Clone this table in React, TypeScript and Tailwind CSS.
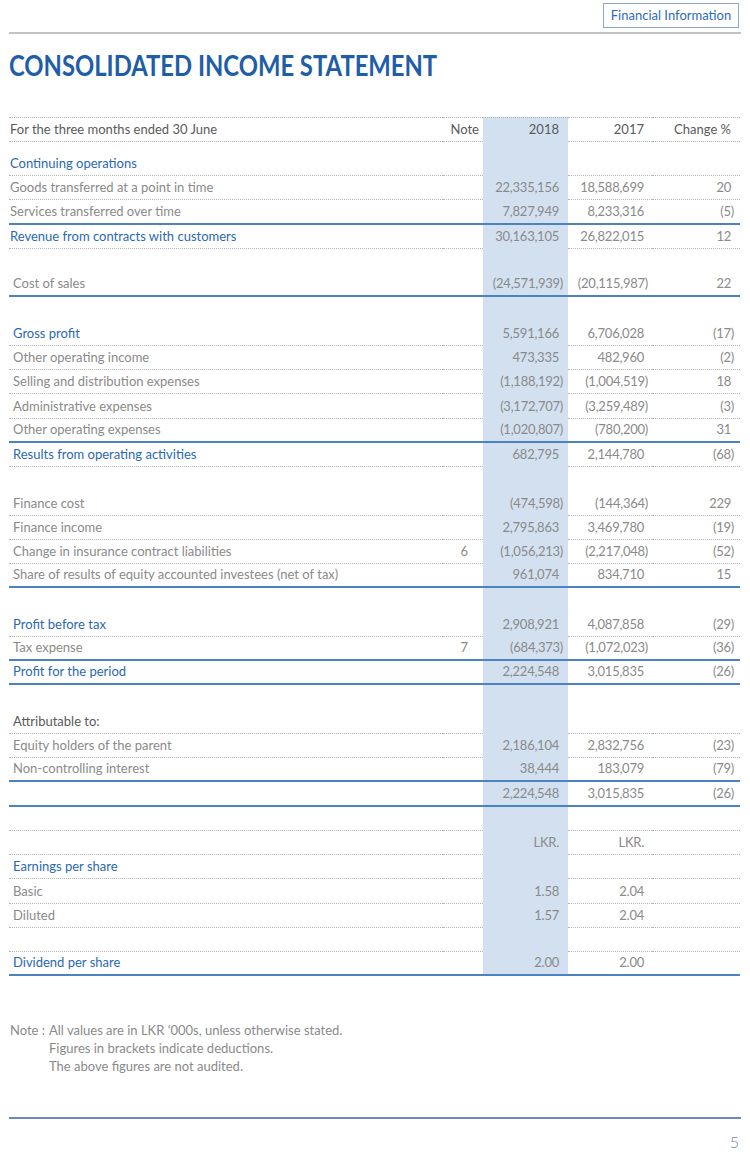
import React from 'react';

type Line = 'dot' | 'blue' | 'none';
type Kind = 'gray' | 'blue' | 'dark';

interface Row {
    label?: string;
    note?: string;
    v18?: string;
    v17?: string;
    ch?: string;
    kind?: Kind;
    line: Line;
    tall?: boolean;
    tight?: boolean;
}

const rows: Row[] = [
    { label: 'Continuing operations', kind: 'blue', line: 'dot', tall: true, tight: true },
    { label: 'Goods transferred at a point in time', v18: '22,335,156', v17: '18,588,699', ch: '20', line: 'dot', tight: true },
    { label: 'Services transferred over time', v18: '7,827,949', v17: '8,233,316', ch: '(5)', line: 'blue', tight: true },
    { label: 'Revenue from contracts with customers', kind: 'blue', v18: '30,163,105', v17: '26,822,015', ch: '12', line: 'dot', tight: true },
    { line: 'none' },
    { label: 'Cost of sales', v18: '(24,571,939)', v17: '(20,115,987)', ch: '22', line: 'blue' },
    { line: 'none' },
    { label: 'Gross profit', kind: 'blue', v18: '5,591,166', v17: '6,706,028', ch: '(17)', line: 'dot' },
    { label: 'Other operating income', v18: '473,335', v17: '482,960', ch: '(2)', line: 'dot' },
    { label: 'Selling and distribution expenses', v18: '(1,188,192)', v17: '(1,004,519)', ch: '18', line: 'dot' },
    { label: 'Administrative expenses', v18: '(3,172,707)', v17: '(3,259,489)', ch: '(3)', line: 'dot' },
    { label: 'Other operating expenses', v18: '(1,020,807)', v17: '(780,200)', ch: '31', line: 'blue' },
    { label: 'Results from operating activities', kind: 'blue', v18: '682,795', v17: '2,144,780', ch: '(68)', line: 'dot' },
    { line: 'none' },
    { label: 'Finance cost', v18: '(474,598)', v17: '(144,364)', ch: '229', line: 'dot' },
    { label: 'Finance income', v18: '2,795,863', v17: '3,469,780', ch: '(19)', line: 'dot' },
    { label: 'Change in insurance contract liabilities', note: '6', v18: '(1,056,213)', v17: '(2,217,048)', ch: '(52)', line: 'dot' },
    { label: 'Share of results of equity accounted investees (net of tax)', v18: '961,074', v17: '834,710', ch: '15', line: 'blue' },
    { line: 'none' },
    { label: 'Profit before tax', kind: 'blue', v18: '2,908,921', v17: '4,087,858', ch: '(29)', line: 'dot' },
    { label: 'Tax expense', note: '7', v18: '(684,373)', v17: '(1,072,023)', ch: '(36)', line: 'blue' },
    { label: 'Profit for the period', kind: 'blue', v18: '2,224,548', v17: '3,015,835', ch: '(26)', line: 'blue' },
    { line: 'none' },
    { label: 'Attributable to:', kind: 'dark', line: 'dot' },
    { label: 'Equity holders of the parent', v18: '2,186,104', v17: '2,832,756', ch: '(23)', line: 'dot' },
    { label: 'Non-controlling interest', v18: '38,444', v17: '183,079', ch: '(79)', line: 'blue' },
    { v18: '2,224,548', v17: '3,015,835', ch: '(26)', line: 'blue' },
    { line: 'dot' },
    { v18: 'LKR.', v17: 'LKR.', line: 'dot' },
    { label: 'Earnings per share', kind: 'blue', line: 'dot' },
    { label: 'Basic', v18: '1.58', v17: '2.04', line: 'dot' },
    { label: 'Diluted', v18: '1.57', v17: '2.04', line: 'dot' },
    { line: 'dot' },
    { label: 'Dividend per share', kind: 'blue', v18: '2.00', v17: '2.00', line: 'blue' },
];

const lineCls: Record<Line, string> = {
    dot: 'border-b border-dotted border-[#b4b4b4]',
    blue: 'border-b-2 border-[#4a82c4]',
    none: '',
};

const shadeLineCls: Record<Line, string> = {
    dot: 'border-b border-dotted border-transparent',
    blue: 'border-b-2 border-[#4a82c4]',
    none: '',
};

const labelCls: Record<Kind, string> = {
    gray: 'text-[#8a8a8a]',
    blue: 'text-[#2a69b2]',
    dark: 'text-[#5a5a5a]',
};

const neg = (v?: string) => !!v && v.startsWith('(');

function TableRow({ row }: { row: Row }) {
    const line = lineCls[row.line];
    const kind = row.kind ?? 'gray';
    return (
        <div className={`flex ${row.tall ? 'h-[34px]' : 'h-[24.25px]'} text-[13px] leading-none`}>
            <div className={`flex-1 flex items-end pb-[5px] ${row.tight ? 'pl-px' : 'pl-[4px]'} ${line} ${labelCls[kind]}`}>
                {row.label}
            </div>
            <div className={`w-[40px] flex items-end justify-end pb-[5px] pr-[15px] text-[#8a8a8a] ${line}`}>
                {row.note}
            </div>
            <div className={`w-[85px] flex items-end justify-end pb-[5px] bg-[#d2e0f0] text-[#8a8a8a] tracking-[-0.25px] ${neg(row.v18) ? 'pr-[5px]' : 'pr-[9px]'} ${shadeLineCls[row.line]}`}>
                {row.v18}
            </div>
            <div className={`w-[84px] flex items-end justify-end pb-[5px] text-[#8a8a8a] tracking-[-0.25px] ${neg(row.v17) ? 'pr-[4px]' : 'pr-[8px]'} ${line}`}>
                {row.v17}
            </div>
            <div className={`w-[88px] flex items-end justify-end pb-[5px] text-[#8a8a8a] tracking-[-0.25px] ${neg(row.ch) ? 'pr-[6px]' : 'pr-[9px]'} ${line}`}>
                {row.ch}
            </div>
        </div>
    );
}

export default function App() {
    return (
        <div className="w-[750px] h-[1155px] bg-white font-[Lato,'Open_Sans',sans-serif] overflow-hidden">
            {/* Section tab */}
            <div className="flex justify-end pt-[3px] pr-[11px]">
                <div className="w-[136px] h-[25px] border border-[#8ba8d4] flex items-center justify-center text-[13px] text-[#2d6cb5]">
                    Financial Information
                </div>
            </div>
            <div className="mx-[9px] mt-[4px] h-[2px] bg-[#c3c3c3]" />

            <h1 className="mt-[18px] pl-[9px] h-[26px] text-[28px] font-bold leading-[26px] text-[#1e5da8] whitespace-nowrap">
                <span className="inline-block origin-left scale-x-[0.85]">CONSOLIDATED INCOME STATEMENT</span>
            </h1>

            {/* Table */}
            <div className="mx-[9px] mt-[39px] w-[731px]">
                <div className="flex h-[25px] text-[13px] leading-none text-[#5a5a5a]">
                    <div className="flex-1 flex items-center pl-px border-y border-dotted border-[#b4b4b4]">
                        For the three months ended 30 June
                    </div>
                    <div className="w-[40px] flex items-center justify-end pr-[4px] border-y border-dotted border-[#b4b4b4]">Note</div>
                    <div className="w-[85px] flex items-center justify-end pr-[9px] bg-[#d2e0f0] border-t border-b border-dotted border-t-[#b4b4b4] border-b-transparent">2018</div>
                    <div className="w-[84px] flex items-center justify-end pr-[8px] border-y border-dotted border-[#b4b4b4]">2017</div>
                    <div className="w-[88px] flex items-center justify-end pr-[9px] border-y border-dotted border-[#b4b4b4]">Change %</div>
                </div>
                {rows.map((r, i) => (
                    <TableRow key={i} row={r} />
                ))}
            </div>

            {/* Notes */}
            <div className="mt-[45px] pl-[10px] flex text-[13px] leading-[18px] text-[#8a8a8a]">
                <div className="w-[39px] shrink-0">Note :</div>
                <div>
                    <p>All values are in LKR ‘000s, unless otherwise stated.</p>
                    <p>Figures in brackets indicate deductions.</p>
                    <p>The above figures are not audited.</p>
                </div>
            </div>

            <div className="mx-[9px] mt-[42px] h-[2px] bg-[#6a88ba]" />
            <div className="mt-[14px] pr-[11px] text-right text-[16px] leading-[18px] font-light text-[#6f84ad]">5</div>
        </div>
    );
}
